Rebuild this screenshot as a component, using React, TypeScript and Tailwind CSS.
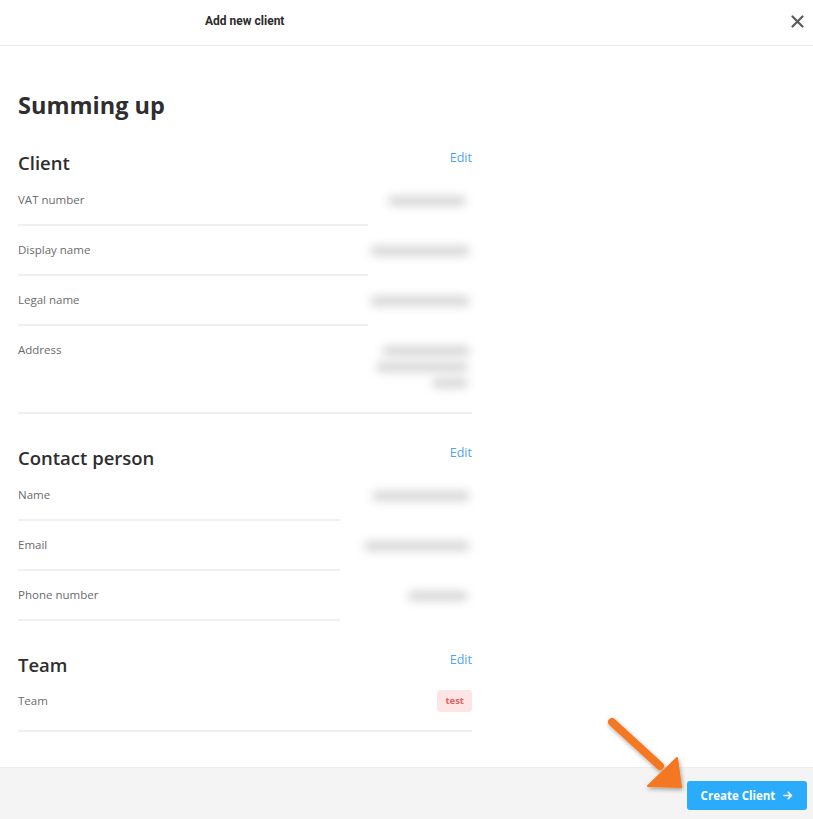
import React from "react";

const Blur = ({ w, ml = 0 }: { w: number; ml?: number }) => (
  <div className="h-[10px] rounded-full bg-[#d6d6d6] blur-[5px]" style={{ width: w, marginLeft: ml }} />
);

const Row = ({ label, children, split = 350, full = false, h = 50 }: { label: string; children?: React.ReactNode; split?: number; full?: boolean; h?: number }) => (
  <div className={"flex " + (full ? "border-b-2 border-[#f0f0f0]" : "")} style={{ height: h }}>
    <div className={"pt-[15px] text-[11.5px] text-[#6b6b6b] " + (full ? "" : "border-b-2 border-[#f0f0f0]")} style={{ width: split }}>
      {label}
    </div>
    <div className="flex-1 bg-white">{children}</div>
  </div>
);

const Heading = ({ title }: { title: string }) => (
  <div className="flex h-[26px] items-center justify-between">
    <h2 className="text-[18.5px] font-semibold text-[#2e2e2e]">{title}</h2>
    <button className="-mt-[10px] text-[12.5px] text-[#4ea4f4]">Edit</button>
  </div>
);

export default function App() {
  return (
    <div className="relative flex h-[819px] w-[813px] flex-col bg-white font-['Open_Sans',sans-serif]">
      <header className="flex h-[46px] shrink-0 items-center border-b border-[#ececec]">
        <div className="ml-[205px] -mt-[3px] font-['Roboto',sans-serif] text-[12px] font-bold text-[#2b2b2b]">Add new client</div>
        <div className="ml-auto mr-[9px] -mt-[3px] text-[#555]">
          <svg width="13" height="13" viewBox="0 0 13 13"><path d="M1.5 1.5 L11.5 11.5 M11.5 1.5 L1.5 11.5" stroke="#5a5a5a" strokeWidth="2.2" strokeLinecap="round" /></svg>
        </div>
      </header>

      <main className="flex-1 px-[18px]">
        <div className="w-[454px]">
          <h1 className="mt-[44px] text-[23.5px] font-bold leading-[30px] text-[#2e2e2e]">Summing up</h1>

          <div className="mt-[30px]">
            <Heading title="Client" />
            <Row label="VAT number">
              <div className="pt-[20px]"><Blur w={78} ml={20} /></div>
            </Row>
            <Row label="Display name">
              <div className="pt-[20px]"><Blur w={100} ml={2} /></div>
            </Row>
            <Row label="Legal name">
              <div className="pt-[20px]"><Blur w={100} ml={2} /></div>
            </Row>
            <Row label="Address" full h={88}>
              <div className="flex flex-col gap-[6px] pt-[20px]">
                <Blur w={88} ml={14} />
                <Blur w={92} ml={8} />
                <Blur w={36} ml={64} />
              </div>
            </Row>
          </div>

          <div className="mt-[31px]">
            <Heading title="Contact person" />
            <Row label="Name" split={322}>
              <div className="pt-[20px]"><Blur w={98} ml={32} /></div>
            </Row>
            <Row label="Email" split={322}>
              <div className="pt-[20px]"><Blur w={106} ml={24} /></div>
            </Row>
            <Row label="Phone number" split={322}>
              <div className="pt-[20px]"><Blur w={60} ml={68} /></div>
            </Row>
          </div>

          <div className="mt-[31px]">
            <Heading title="Team" />
            <div className="flex h-[54px] items-start justify-between border-b-2 border-[#f0f0f0] pt-[13px]">
              <div className="pt-[1px] text-[11.5px] text-[#6b6b6b]">Team</div>
              <span className="-mt-[1px] rounded-[3px] bg-[#fde5e5] px-[8px] py-[4px] text-[9.5px] font-bold text-[#e26363]">test</span>
            </div>
          </div>
        </div>
      </main>

      <footer className="flex h-[52px] shrink-0 items-center justify-end border-t border-[#ededed] bg-[#f4f4f4] pr-[6px]">
        <button className="mt-[4px] flex h-[29px] w-[120px] items-center justify-center gap-[8px] rounded-[3px] bg-[#2aabfb] text-[11.5px] font-bold text-white">
          Create Client
          <svg width="10" height="9" viewBox="0 0 10 9"><path d="M1 4.5 H8.5 M5.2 1.2 L8.5 4.5 L5.2 7.8" stroke="white" strokeWidth="1.6" fill="none" strokeLinecap="round" strokeLinejoin="round" /></svg>
        </button>
      </footer>

      <svg className="pointer-events-none absolute left-[600px] top-[712px]" width="90" height="84" viewBox="0 0 90 84">
        <defs>
          <filter id="sh" x="-20%" y="-20%" width="150%" height="150%">
            <feDropShadow dx="1" dy="2" stdDeviation="2" floodColor="#000" floodOpacity="0.35" />
          </filter>
        </defs>
        <g filter="url(#sh)">
          <path d="M12 10 L60 54" stroke="#f47820" strokeWidth="8" strokeLinecap="round" />
          <path d="M48 74 L81 75 L77 46 Z" fill="#f47820" stroke="#f47820" strokeWidth="2" strokeLinejoin="round" />
        </g>
      </svg>
    </div>
  );
}
